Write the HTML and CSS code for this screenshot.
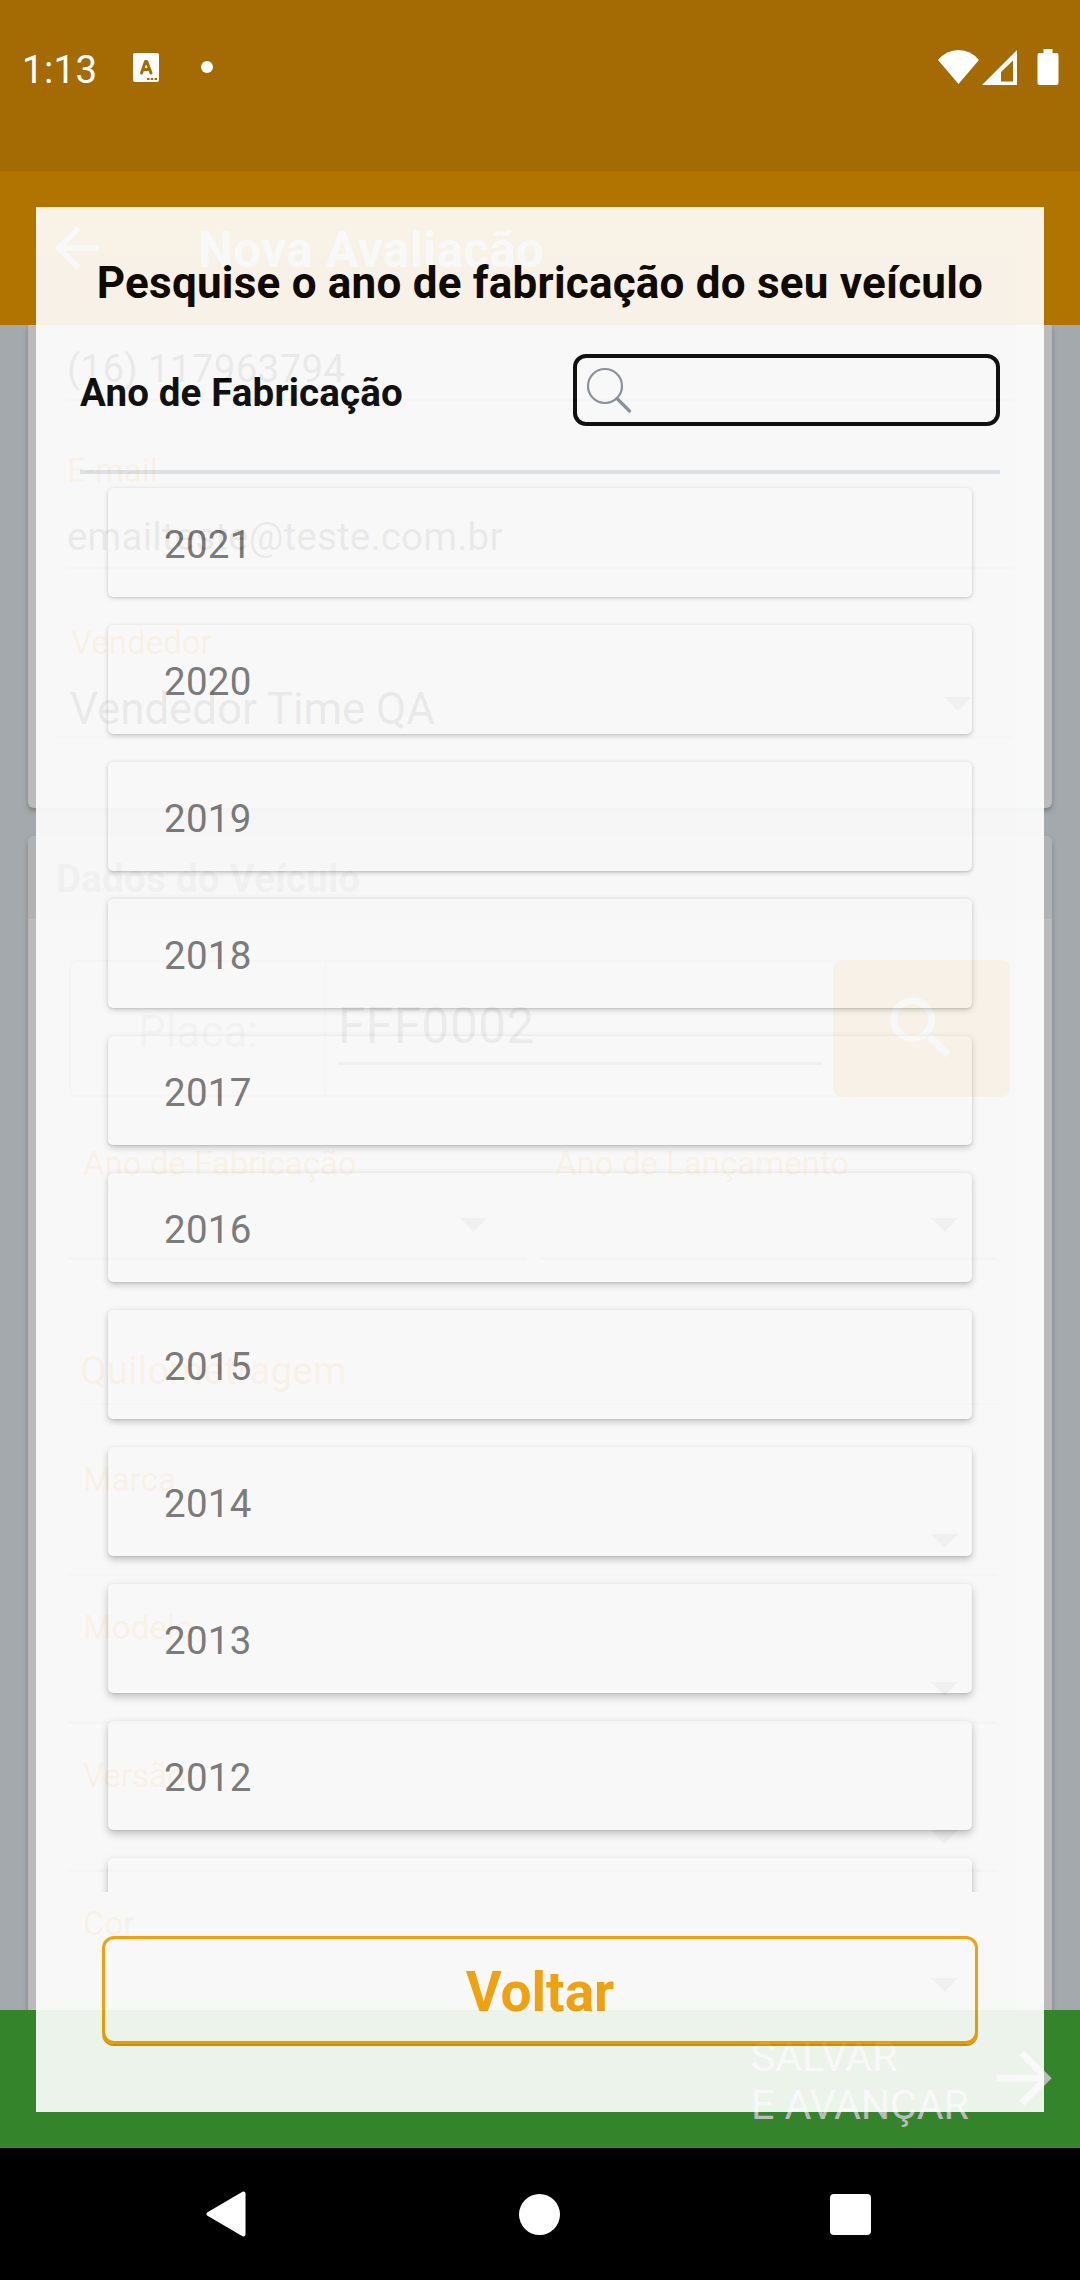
FILE: index.html
```
<!DOCTYPE html>
<html lang="pt-BR">
<head>
<meta charset="utf-8">
<title>Nova Avaliação</title>
<link rel="stylesheet" href="styles.css">
</head>
<body>
<div class="screen">
  <header class="status-bar">
    <span class="clock">1:13</span>
    <svg class="status-app" viewBox="0 0 26 29"><path fill="#fff" d="M2 0h22a2 2 0 0 1 2 2v25a2 2 0 0 1-2 2H2a2 2 0 0 1-2-2V2a2 2 0 0 1 2-2z"/><path fill="none" stroke="#a46a03" stroke-width="3" stroke-linejoin="round" stroke-linecap="round" d="M8.500 20 12.500 8.500h1.200L18 20M10 16.500h6.500"/><path fill="#a46a03" d="M14 25h2.500v2H14zM17.700 25h2.500v2h-2.500zM21.500 25H24v2h-2.500z"/></svg>
    <span class="status-dot"></span>
    <svg class="status-system" viewBox="0 0 121 36">
      <path fill="#fff" d="M0 12Q8.500 2 20.500 2T41 12L20.500 36z"/>
      <path fill="#fff" fill-rule="evenodd" d="M44 37 79 2v35zM63 33.500h12V12.500L63 24z"/>
      <path fill="#fff" d="M105.500 1h9v4h4a2 2 0 0 1 2 2v28a2 2 0 0 1-2 2h-17a2 2 0 0 1-2-2V7a2 2 0 0 1 2-2h4z"/>
    </svg>
  </header>

  <div class="app-bar">
    <svg class="back" viewBox="0 0 24 24"><path d="M20 11H7.830l5.590-5.590L12 4l-8 8 8 8 1.410-1.410L7.830 13H20v-2z"/></svg>
    <h1 class="app-title">Nova Avaliação</h1>
  </div>

  <main class="content">
    <section class="card contact">
      <div class="entry">(16) 117963794</div>
      <div class="label label-email">E-mail</div>
      <div class="entry entry-email">emailteste@teste.com.br</div>
      <div class="label label-seller">Vendedor</div>
      <div class="picker picker-seller"><span>Vendedor Time QA</span><i class="caret"></i></div>
    </section>
    <section class="card vehicle">
      <h2 class="card-title">Dados do Veículo</h2>
      <div class="plate">
        <div class="plate-label">Placa:</div>
        <div class="plate-entry">FFF0002</div>
        <div class="plate-search"><svg viewBox="0 0 24 24"><path d="M15.500 14h-.79l-.28-.27A6.471 6.471 0 0 0 16 9.500 6.500 6.500 0 1 0 9.500 16c1.610 0 3.090-.59 4.230-1.570l.27.28v.79l5 4.990L20.490 19l-4.990-5zm-6 0C7.010 14 5 11.990 5 9.500S7.010 5 9.500 5 14 7.010 14 9.500 11.990 14 9.500 14z"/></svg></div>
      </div>
      <div class="years">
        <div><div class="label">Ano de Fabricação</div><div class="picker"><i class="caret"></i></div></div>
        <div><div class="label">Ano de Lançamento</div><div class="picker"><i class="caret"></i></div></div>
      </div>
      <div class="mileage">Quilometragem</div>
      <div class="selects">
        <div><div class="label">Marca</div><div class="picker"><i class="caret"></i></div></div>
        <div><div class="label">Modelo</div><div class="picker"><i class="caret"></i></div></div>
        <div><div class="label">Versão</div><div class="picker"><i class="caret"></i></div></div>
        <div><div class="label">Cor</div><div class="picker"><i class="caret"></i></div></div>
      </div>
    </section>
  </main>

  <footer class="save-bar">
    <span class="save-text">SALVAR<br>E AVANÇAR</span>
    <svg class="next" viewBox="0 0 24 24"><path d="M12 4l-1.410 1.410L16.170 11H4v2h12.170l-5.580 5.590L12 20l8-8z"/></svg>
  </footer>

  <nav class="nav-bar">
    <svg viewBox="0 0 40 46"><path d="M37.500 2.500v41L2.500 23z" stroke-width="4" stroke="#fff" stroke-linejoin="round"/></svg>
    <svg viewBox="0 0 40 40"><circle cx="20" cy="20" r="20"/></svg>
    <svg viewBox="0 0 41 41"><rect width="41" height="41" rx="4"/></svg>
  </nav>

  <div class="dialog">
    <h2 class="dialog-title">Pesquise o ano de fabricação do seu veículo</h2>
    <div class="search-row">
      <span class="search-label">Ano de Fabricação</span>
      <div class="search-box"><svg viewBox="0 0 46 46"><circle cx="19" cy="19" r="17" stroke-width="2.200"/><path d="M31 31.500 43.500 44" stroke-width="3.200" stroke-linecap="round"/></svg></div>
    </div>
    <div class="divider"></div>
    <ul class="year-list">
      <li style="--depth:0">2021</li>
      <li style="--depth:1">2020</li>
      <li style="--depth:2">2019</li>
      <li style="--depth:3">2018</li>
      <li style="--depth:4">2017</li>
      <li style="--depth:5">2016</li>
      <li style="--depth:6">2015</li>
      <li style="--depth:7">2014</li>
      <li style="--depth:8">2013</li>
      <li style="--depth:9">2012</li>
      <li style="--depth:10"></li>
    </ul>
    <button class="back-button">Voltar</button>
  </div>
</div>
</body>
</html>
```
FILE: styles.css
```
* { box-sizing: border-box; margin: 0; padding: 0; }
body { font-family: Roboto, "Noto Sans", sans-serif; font-size: 38.5px; }

.screen {
  position: relative;
  display: flex;
  flex-direction: column;
  width: 1080px;
  height: 2280px;
  overflow: hidden;
  background: #a4a9ad;
}

/* Status bar */
.status-bar {
  display: flex;
  flex: none;
  align-items: flex-start;
  height: 171px;
  padding: 44px 22px 0 22px;
  background: #a46a03;
  color: #fff;
}
.clock { width: 111px; padding-top: 1px; line-height: 50px; letter-spacing: .3px; }
.status-app { width: 26px; height: 29px; margin-top: 9px; }
.status-dot { width: 12px; height: 12px; margin: 17px 0 0 42px; border-radius: 50%; background: #fff; }
.status-system { width: 121px; height: 36px; margin: 4px -1px 0 auto; overflow: visible; }

/* App bar */
.app-bar {
  display: flex;
  flex: none;
  align-items: flex-start;
  height: 154px;
  padding: 44px 44px 0;
  background: #b27400;
  color: #bbb;
}
.back { width: 66px; height: 66px; fill: #bbb; }
.app-title { margin: 5px 0 0 88px; font-size: 49.5px; line-height: 60px; letter-spacing: .3px; }

/* Form behind the dialog */
.content { flex: none; height: 1685px; padding: 0 28px; overflow: hidden; }
.card { background: #bbb; box-shadow: 0 3px 5px rgba(0, 0, 0, .25); }
.contact { height: 483px; padding: 19px 39.5px 0 39px; border-radius: 0 0 6px 6px; }
.entry {
  height: 57px;
  border-bottom: 2px solid #9c9c9c;
  color: #1c1c1c;
  line-height: 50px;
  letter-spacing: .3px;
}
.entry-email { margin-top: 21px; letter-spacing: .2px; }
.label { padding-left: 14px; color: #b27400; font-size: 33px; line-height: 40px; }
.label-email { margin-top: 50px; padding-left: 0; }
.label-seller { margin-top: 54px; padding-left: 4px; }
.picker {
  display: flex;
  justify-content: flex-end;
  height: 77px;
  padding: 35px 39px 0;
  border-bottom: 3px solid #999;
}
.picker-seller {
  justify-content: space-between;
  height: 58px;
  margin: 18px 2px 0 -11px;
  padding: 0 39px 0 14px;
  color: #1c1c1c;
  font-size: 44px;
  line-height: 56px;
  letter-spacing: -.1px;
}
.picker-seller .caret { margin-top: 16px; }
.caret { width: 27px; height: 14px; background: #646464; clip-path: polygon(0 0, 100% 0, 50% 100%); }

.vehicle { height: 1400px; margin-top: 28px; border-radius: 6px; }
.card-title {
  height: 83px;
  padding: 18px 28px 0;
  border-radius: 6px 6px 0 0;
  background: #b1b2b4;
  color: #606060;
  font-size: 38.5px;
  line-height: 50px;
  letter-spacing: .25px;
}
.plate {
  display: flex;
  height: 137px;
  margin: 41px 42px 0 41px;
  border: 2px solid #9a9a9a;
  border-right: 0;
  border-radius: 8px;
}
.plate-label {
  width: 256px;
  padding-top: 42px;
  border-right: 3px solid #9f9f9f;
  color: #7d7d7d;
  font-size: 44px;
  line-height: 56px;
  padding-left: 67px;
}
.plate-entry {
  width: 484px;
  height: 103px;
  margin-left: 11px;
  padding-top: 34px;
  border-bottom: 3px solid #666;
  color: #303030;
  font-size: 49.5px;
  line-height: 60px;
  letter-spacing: .5px;
}
.plate-search { width: 177px; margin: -2px 0 -2px 11px; padding: 27px 47px; border-radius: 9px; background: #b27400; }
.plate-search svg { display: block; width: 82.5px; height: 82.5px; fill: #bbb; }
.years { display: grid; grid-template-columns: 457px 456px; gap: 15px; margin: 47px 0 0 41px; }
.years .picker { height: 76px; padding-top: 34px; }
.mileage {
  height: 59px;
  margin: 86px 52px 0;
  border-bottom: 2px solid #a6a6a6;
  color: #b27400;
  line-height: 50px;
  letter-spacing: .2px;
}
.selects { display: grid; gap: 31px; margin: 54px 55px 0 41px; }
.selects .label { height: 40px; padding-top: 1px; }

/* Save bar */
.save-bar {
  display: flex;
  flex: none;
  height: 138px;
  padding: 23px 15px 0 751px;
  background: #34842c;
  color: #bbb;
}
.save-text { width: 232px; font-size: 41.25px; line-height: 48.3px; letter-spacing: -.15px; white-space: nowrap; }
.next { width: 82.5px; height: 82.5px; margin-top: 4px; fill: #bbb; }

/* System navigation */
.nav-bar { display: flex; flex: none; align-items: center; height: 132px; padding: 0 209px 0 205.5px; background: #000; }
.nav-bar svg { width: 41px; height: 41px; fill: #fff; }
.nav-bar svg:first-child { width: 40px; height: 46px; }
.nav-bar svg:nth-child(2) { margin: 0 auto; position: relative; left: 1.5px; }

/* Translucent year picker */
.dialog {
  position: absolute;
  top: 207px;
  left: 36px;
  width: 1008px;
  height: 1905px;
  padding-top: 46px;
  background: #fff;
  opacity: .907;
}
.dialog-title { color: #000; font-size: 44px; line-height: 60px; letter-spacing: .22px; text-align: center; white-space: nowrap; }
.search-row { display: flex; justify-content: space-between; align-items: center; margin: 41px 44px 0; }
.search-label { padding-top: 6px; color: #000; font-weight: 700; line-height: 50px; letter-spacing: .15px; }
.search-box { width: 427px; height: 72px; padding: 9px; border: 4px solid #000; border-radius: 13px; }
.search-box svg { display: block; width: 46px; height: 46px; fill: none; stroke: #858d95; }
.divider { height: 4px; margin: 44px 44px 0; background: #dfe6ec; }
.year-list {
  display: flex;
  flex-direction: column;
  gap: 28px;
  height: 1418px;
  padding: 14px 72px 0;
  overflow: hidden;
  list-style: none;
}
.year-list li {
  flex: none;
  height: 109px;
  padding: 4px 56px 0;
  border-radius: 5px;
  background: #fff;
  box-shadow:
    0 calc(1px + var(--depth) * .3px) calc(5px + var(--depth) * .4px) rgba(0, 0, 0, calc(.17 + var(--depth) * .008)),
    0 1px 2px rgba(0, 0, 0, .1);
  color: #757575;
  line-height: 105px;
  letter-spacing: .3px;
}
.back-button {
  display: block;
  width: 876px;
  height: 108px;
  margin: 44px auto 0;
  padding-top: 5px;
  border: 3px solid #f5a000;
  border-radius: 12px;
  background: transparent;
  box-shadow: 0 2px 0 #dc8f00;
  color: #f5a000;
  font: 700 55px/97px Roboto, "Noto Sans", sans-serif;
}
```
